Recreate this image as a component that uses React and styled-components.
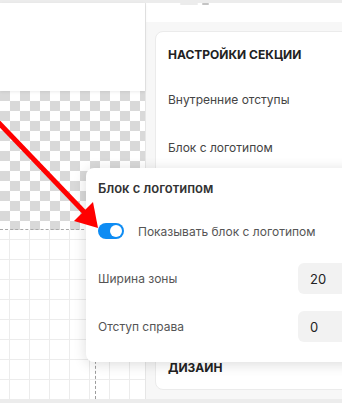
import styled, { createGlobalStyle } from "styled-components";

const GlobalStyle = createGlobalStyle`
  html, body {
    margin: 0;
    padding: 0;
    background: #fff;
  }
  body {
    font-family: Inter, "Noto Sans", "Liberation Sans", sans-serif;
    -webkit-font-smoothing: antialiased;
  }
`;

function App() {
  return (
    <Screen>
      <GlobalStyle />
      <Strip />
      <Main>
        <Canvas>
          <CanvasHeader />
          <Checker />
          <GridArea>
            <Guide />
          </GridArea>
        </Canvas>
        <Panel>
          <PanelHeader>
            <HeaderMark light />
            <HeaderMark />
          </PanelHeader>
          <PanelBody>
            <Card>
              <CardTitle>Настройки секции</CardTitle>
              <CardRow>Внутренние отступы</CardRow>
              <CardRow>Блок с логотипом</CardRow>
              <CardTitle bottom>Дизайн</CardTitle>
            </Card>
          </PanelBody>
        </Panel>
      </Main>
      <Strip bottom />

      <Popover>
        <PopTitle>Блок с логотипом</PopTitle>
        <ToggleRow>
          <Switch on>
            <Knob />
          </Switch>
          <ToggleLabel>Показывать блок с логотипом</ToggleLabel>
        </ToggleRow>
        <Field>
          <FieldLabel>Ширина зоны</FieldLabel>
          <Input>20</Input>
        </Field>
        <Field>
          <FieldLabel>Отступ справа</FieldLabel>
          <Input>0</Input>
        </Field>
      </Popover>

      <Arrow viewBox="0 0 342 403" width="342" height="403">
        <line x1="-4" y1="120" x2="87" y2="215" stroke="#ff0000" strokeWidth="5" />
        <polygon points="98,228 93,202 74,221" fill="#ff0000" />
      </Arrow>
    </Screen>
  );
}

export default App;

const Screen = styled.div`
  position: relative;
  width: 342px;
  height: 403px;
  overflow: hidden;
  display: flex;
  flex-direction: column;
  background: #fff;
`;

const Strip = styled.div`
  height: ${(props) => (props.bottom ? "4px" : "3px")};
  flex-shrink: 0;
  background: #ececec;
`;

const Main = styled.div`
  flex: 1;
  display: flex;
  min-height: 0;
`;

const Canvas = styled.div`
  width: 145px;
  flex-shrink: 0;
  display: flex;
  flex-direction: column;
  border-right: 1px solid #e6e6e6;
`;

const CanvasHeader = styled.div`
  height: 88px;
  background: #fff;
  position: relative;
  z-index: 1;
  box-shadow: 0 1px 3px rgba(0, 0, 0, 0.08);
`;

const Checker = styled.div`
  height: 138px;
  border-bottom: 1px dashed #a8a8a8;
  background: repeating-conic-gradient(#fff 0 25%, #d9d9d9 0 50%) 0 0 / 20px 20px;
`;

const GridArea = styled.div`
  flex: 1;
  display: flex;
  background-color: #fff;
  background-image: linear-gradient(to right, #ececec 1px, transparent 1px),
    linear-gradient(to bottom, #ececec 1px, transparent 1px);
  background-size: 20px 20px;
  background-position: 9px 9px;
`;

const Guide = styled.div`
  width: 95px;
  border-right: 1px dashed #9c9c9c;
`;

const Panel = styled.div`
  flex: 1;
  display: flex;
  flex-direction: column;
  background: #f7f7f7;
`;

const PanelHeader = styled.div`
  height: 19px;
  background: #fff;
  display: flex;
  align-items: flex-start;
  gap: 4px;
  padding-left: 34px;
`;

const HeaderMark = styled.div`
  width: ${(props) => (props.light ? "18px" : "7px")};
  height: 2px;
  border-radius: 1px;
  background: ${(props) => (props.light ? "#ececec" : "#c4c4c4")};
`;

const PanelBody = styled.div`
  flex: 1;
  padding: 9px 0 0 9px;
`;

const Card = styled.div`
  width: 230px;
  height: 359px;
  box-sizing: border-box;
  background: #fff;
  border: 1px solid #ebebeb;
  border-radius: 8px;
  padding: 15px 12px 13px;
  display: flex;
  flex-direction: column;
`;

const CardTitle = styled.div`
  font-size: 12px;
  line-height: 16px;
  font-weight: 700;
  color: #222;
  text-transform: uppercase;
  margin-bottom: ${(props) => (props.bottom ? "0" : "12px")};
  margin-top: ${(props) => (props.bottom ? "auto" : "0")};
`;

const CardRow = styled.div`
  height: 48px;
  display: flex;
  align-items: center;
  font-size: 12px;
  color: #444;
`;

const Popover = styled.div`
  position: absolute;
  left: 86px;
  top: 168px;
  width: 290px;
  height: 194px;
  box-sizing: border-box;
  background: #fff;
  border-radius: 8px;
  box-shadow: 0 2px 14px rgba(0, 0, 0, 0.14);
  padding: 12px 12px 20px;
  display: flex;
  flex-direction: column;
  z-index: 2;
`;

const PopTitle = styled.div`
  font-size: 13px;
  line-height: 16px;
  font-weight: 600;
  color: #333;
  margin-bottom: 27px;
`;

const ToggleRow = styled.div`
  display: flex;
  align-items: center;
  gap: 14px;
  height: 16px;
  margin-bottom: 24px;
`;

const Switch = styled.div`
  width: 26px;
  height: 16px;
  border-radius: 8px;
  background: ${(props) => (props.on ? "#0e8cf3" : "#ccc")};
  display: flex;
  align-items: center;
  justify-content: ${(props) => (props.on ? "flex-end" : "flex-start")};
  padding: 0 2px;
  box-sizing: border-box;
  flex-shrink: 0;
`;

const Knob = styled.div`
  width: 12px;
  height: 12px;
  border-radius: 50%;
  background: #fff;
`;

const ToggleLabel = styled.span`
  font-size: 12px;
  color: #555;
`;

const Field = styled.div`
  display: flex;
  align-items: center;
  height: 31px;
  & + & {
    margin-top: 17px;
  }
`;

const FieldLabel = styled.div`
  width: 200px;
  font-size: 12px;
  color: #555;
`;

const Input = styled.div`
  flex: 1;
  height: 31px;
  display: flex;
  align-items: center;
  padding-left: 12px;
  border-radius: 6px;
  background: #f2f2f2;
  font-size: 13px;
  color: #222;
`;

const Arrow = styled.svg`
  position: absolute;
  left: 0;
  top: 0;
  z-index: 3;
  pointer-events: none;
`;
